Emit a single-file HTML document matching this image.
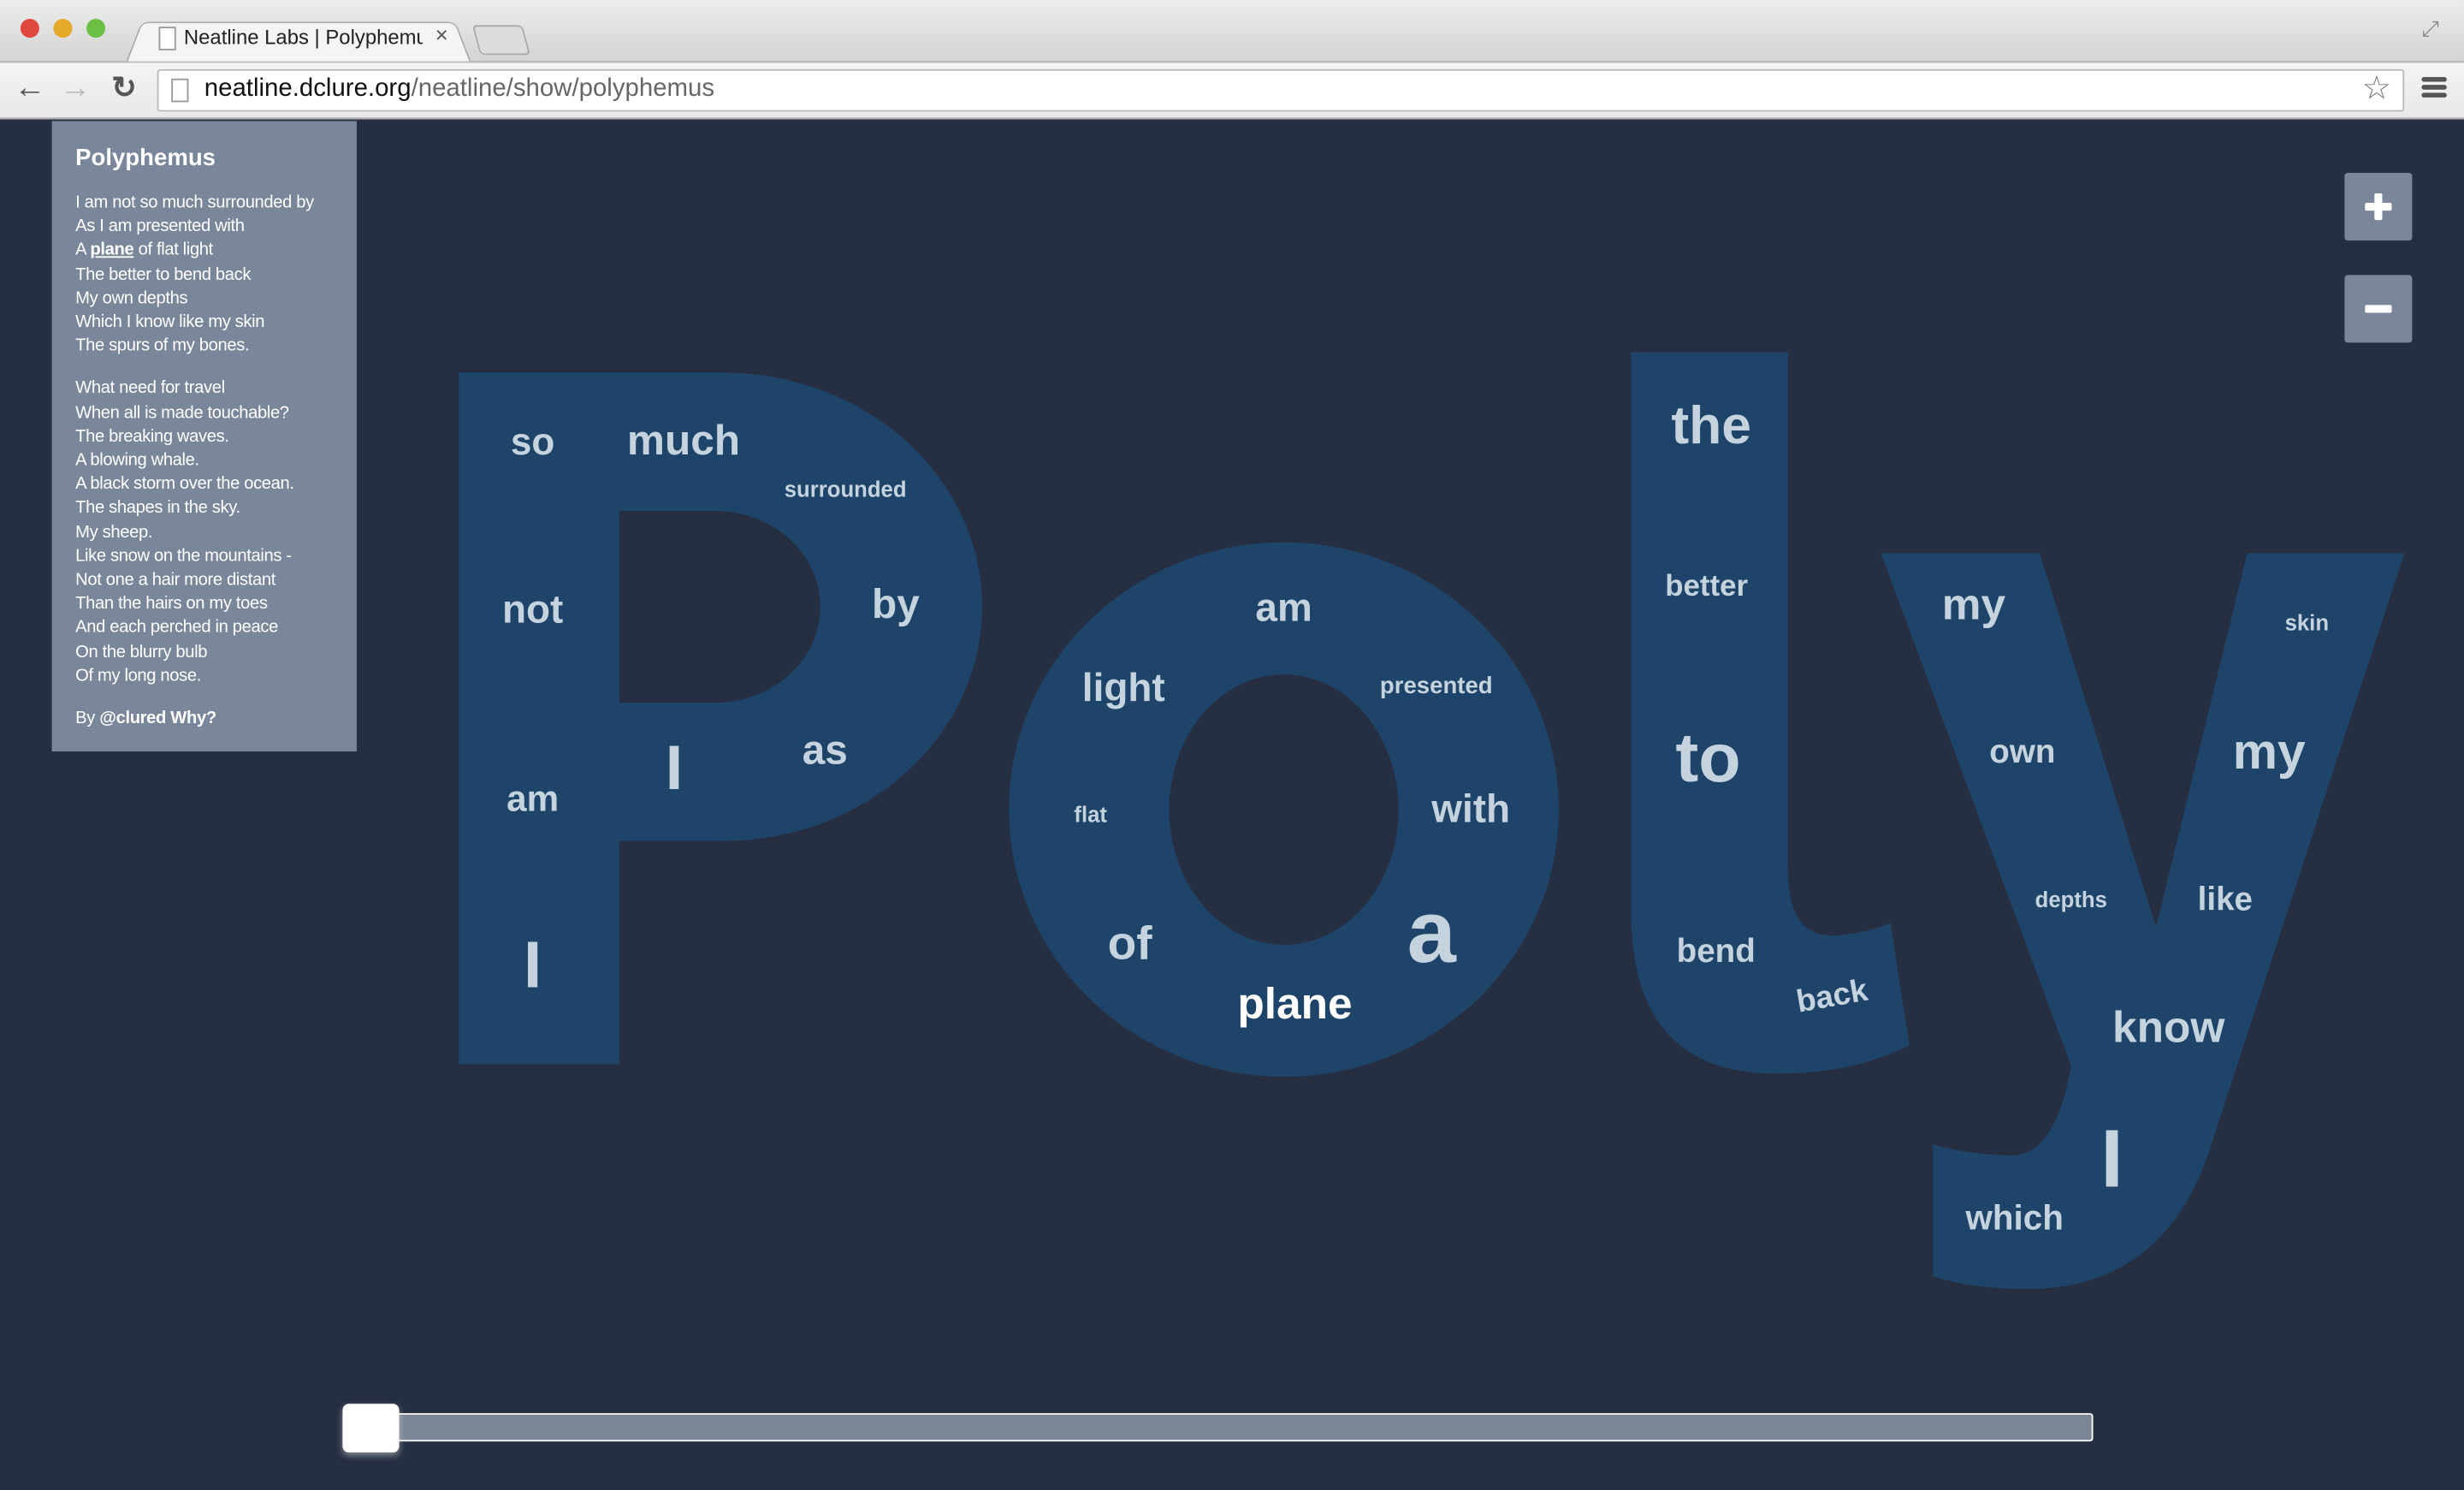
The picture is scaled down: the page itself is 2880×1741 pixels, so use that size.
<!DOCTYPE html>
<html><head><meta charset="utf-8"><style>
html,body{margin:0;padding:0;width:2880px;height:1741px;overflow:hidden;background:#262f42}
#w{position:absolute;left:0;top:0;width:1568px;height:948px;transform:scale(1.83673);transform-origin:0 0;font-family:"Liberation Sans",sans-serif}
.top{position:absolute;left:0;top:0;width:1568px;height:39px;background:linear-gradient(#ececec,#d4d4d4)}
.tb{position:absolute;left:0;top:39px;width:1568px;height:37px;background:linear-gradient(#f4f4f4,#e8e8e8);border-top:1px solid #bdbdbd;border-bottom:1px solid #a9a9a9;box-sizing:border-box}
.dot{position:absolute;top:12px;width:12px;height:12px;border-radius:50%}
.tab{position:absolute;left:80px;top:11px;width:218px;height:28px;background:#f4f4f4;border:1px solid #aaa;border-bottom:none;border-radius:5px 5px 0 0;transform:perspective(40px) rotateX(8deg);transform-origin:bottom}
.url{position:absolute;left:100px;top:44px;width:1430px;height:27px;background:#fff;border:1px solid #b9b9b9;border-radius:2px;box-sizing:border-box}
.side{position:absolute;left:33px;top:77px;width:194px;height:401px;background:#7a8699;color:#fff;box-sizing:border-box;padding:15px 15px}
.side h1{font-size:15px;margin:0 0 13px;font-weight:bold}
.side p{font-size:11px;line-height:15.2px;margin:0 0 12px;letter-spacing:-0.2px}
.btn{position:absolute;left:1492px;width:43px;height:43px;background:#7a8699;border-radius:2px}
</style></head><body><div id="w">
<div class="top"></div>
<div class="dot" style="left:13px;background:#e0473f"></div>
<div class="dot" style="left:34px;background:#e6a92a"></div>
<div class="dot" style="left:55px;background:#6bbf43"></div>
<div class="tab"></div>
<div style="position:absolute;left:101px;top:17px;width:9px;height:13px;border:1px solid #999;background:#fff"></div>
<div style="position:absolute;left:117px;top:16px;font-size:13px;color:#222;width:152px;white-space:nowrap;overflow:hidden">Neatline Labs | Polyphemus</div>
<div style="position:absolute;left:277px;top:14px;font-size:14px;color:#555">×</div>
<div style="position:absolute;left:303px;top:16px;width:30px;height:17px;border:1px solid #aaa;border-radius:3px;background:#ddd;transform:skewX(15deg)"></div>
<div style="position:absolute;left:1541px;top:10px;font-size:14px;color:#888">⤢</div>
<div class="tb"></div>
<div style="position:absolute;left:9px;top:45px;font-size:20px;color:#555;font-weight:bold">←</div>
<div style="position:absolute;left:38px;top:45px;font-size:20px;color:#bbb;font-weight:bold">→</div>
<div style="position:absolute;left:71px;top:45px;font-size:19px;color:#555;font-weight:bold">↻</div>
<div class="url"></div>
<div style="position:absolute;left:109px;top:50px;width:9px;height:13px;border:1px solid #999;background:#fff"></div>
<div style="position:absolute;left:130px;top:48px;font-size:16px;color:#111">neatline.dclure.org<span style="color:#666">/neatline/show/polyphemus</span></div>
<div style="position:absolute;left:1503px;top:44px;font-size:21px;color:#777">☆</div>
<div style="position:absolute;left:1541px;top:49px;width:16px;height:3px;background:#555;border-radius:2px;box-shadow:0 5px 0 #555,0 10px 0 #555"></div>

<svg style="position:absolute;left:0;top:0" width="1568" height="948">
<g fill="#1e446a" fill-rule="evenodd">
<path d="M292,677V237H460A165,149 0 0 1 460,535H394V677Z M394,325H455A67,61 0 0 1 455,447H394Z"/>
<path d="M642,515a175,170 0 1 0 350,0a175,170 0 1 0 -350,0Z M744,515a73,86 0 1 0 146,0a73,86 0 1 0 -146,0Z"/>
<path d="M1038,224H1138V555Q1138,598 1170,595Q1190,593 1203,587L1215,665Q1180,683 1130,683Q1038,683 1038,580Z"/>
<path d="M1197,352H1298L1372,590L1430,352H1530L1405,735Q1375,820 1290,820Q1255,820 1230,812V728Q1255,735 1280,735Q1308,735 1318,678Z"/>
</g>
<g fill="#c5d3de" font-family="Liberation Sans,sans-serif" font-weight="bold" text-anchor="middle">
<text x="339" y="289" font-size="24">so</text>
<text x="435" y="289" font-size="27">much</text>
<text x="538" y="316" font-size="14">surrounded</text>
<text x="339" y="396" font-size="25">not</text>
<text x="570" y="393" font-size="26">by</text>
<text x="525" y="486" font-size="26">as</text>
<text x="429" y="502" font-size="40">I</text>
<text x="339" y="516" font-size="23">am</text>
<text x="339" y="628" font-size="42">I</text>
<text x="817" y="395" font-size="25">am</text>
<text x="715" y="446" font-size="25">light</text>
<text x="914" y="441" font-size="15">presented</text>
<text x="694" y="523" font-size="14">flat</text>
<text x="936" y="523" font-size="25">with</text>
<text x="719" y="610" font-size="30">of</text>
<text x="911" y="612" font-size="56">a</text>
<text x="824" y="648" font-size="28" fill="#fff">plane</text>
<text x="1089" y="282" font-size="34">the</text>
<text x="1086" y="379" font-size="19">better</text>
<text x="1087" y="497" font-size="44">to</text>
<text x="1092" y="612" font-size="21">bend</text>
<text x="1167" y="640" font-size="20" transform="rotate(-10 1167 640)">back</text>
<text x="1256" y="394" font-size="28">my</text>
<text x="1468" y="401" font-size="14">skin</text>
<text x="1287" y="485" font-size="21">own</text>
<text x="1444" y="489" font-size="32">my</text>
<text x="1318" y="577" font-size="14">depths</text>
<text x="1416" y="579" font-size="21">like</text>
<text x="1380" y="663" font-size="28">know</text>
<text x="1344" y="755" font-size="52">I</text>
<text x="1282" y="782" font-size="22">which</text>
</g>
</svg>

<div class="side">
<h1>Polyphemus</h1>
<p>I am not so much surrounded by<br>As I am presented with<br>A <b style="text-decoration:underline">plane</b> of flat light<br>The better to bend back<br>My own depths<br>Which I know like my skin<br>The spurs of my bones.</p>
<p>What need for travel<br>When all is made touchable?<br>The breaking waves.<br>A blowing whale.<br>A black storm over the ocean.<br>The shapes in the sky.<br>My sheep.<br>Like snow on the mountains -<br>Not one a hair more distant<br>Than the hairs on my toes<br>And each perched in peace<br>On the blurry bulb<br>Of my long nose.</p>
<p style="margin-top:12px">By <b>@clured</b> <b>Why?</b></p>
</div>

<div class="btn" style="top:110px"><div style="position:absolute;left:13px;top:19px;width:17px;height:5px;background:#fff;border-radius:1px"></div><div style="position:absolute;left:19px;top:13px;width:5px;height:17px;background:#fff;border-radius:1px"></div></div>
<div class="btn" style="top:175px"><div style="position:absolute;left:13px;top:19px;width:17px;height:5px;background:#fff;border-radius:1px"></div></div>

<div style="position:absolute;left:230px;top:899px;width:1102px;height:18px;background:#7b8595;border:1px solid #fff;box-sizing:border-box;border-radius:2px"></div>
<div style="position:absolute;left:218px;top:893px;width:36px;height:31px;background:#fff;border-radius:4px;box-shadow:0 2px 4px rgba(255,255,255,.4)"></div>
</div></body></html>
